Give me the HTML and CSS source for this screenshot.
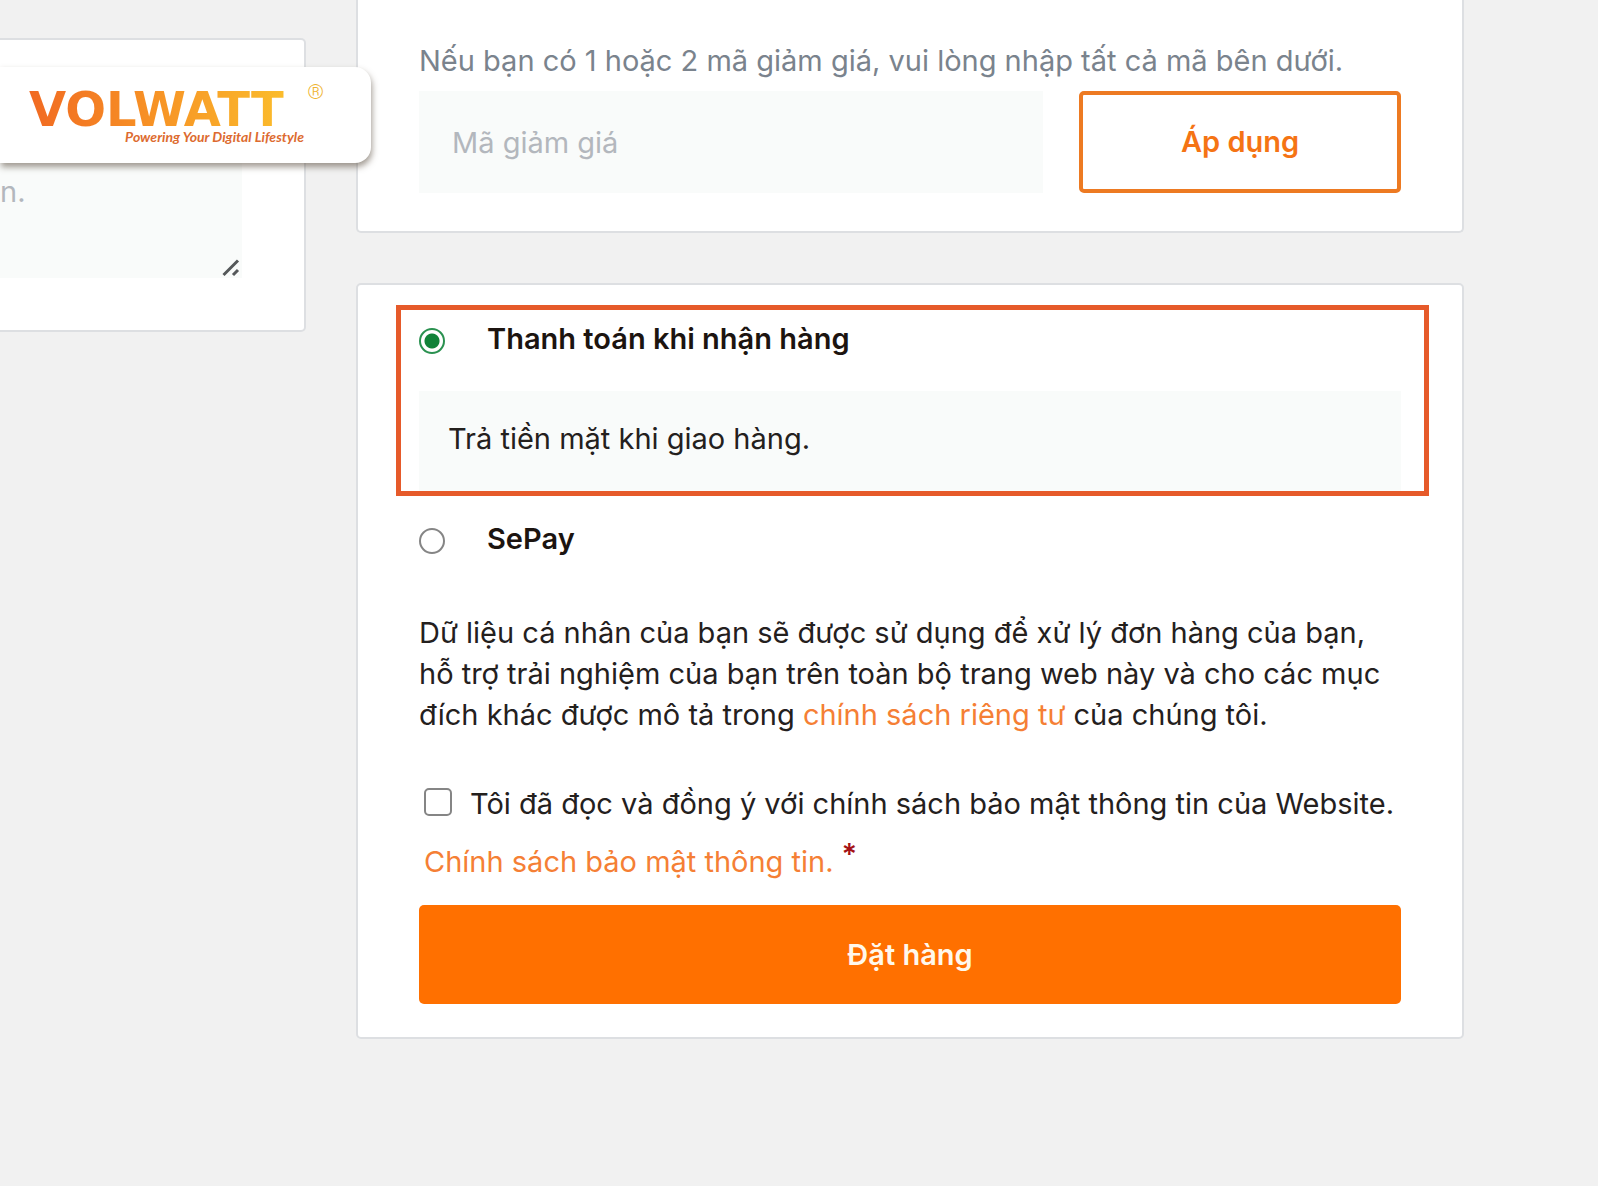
FILE: index.html
```html
<!DOCTYPE html>
<html lang="vi">
<head>
<meta charset="utf-8">
<meta name="viewport" content="width=device-width, initial-scale=1">
<title>Thanh toán</title>
<link rel="stylesheet" href="styles.css">
</head>
<body>
<div class="page">
  <header class="brand">
    <div class="brand-name"><span class="brand-word">VOLWATT</span><span class="brand-mark">®</span></div>
    <p class="brand-tagline">Powering Your Digital Lifestyle</p>
  </header>

  <main class="checkout">
    <section class="card notes">
      <div class="notes-field">
        <textarea class="notes-input" placeholder="n." aria-label="Ghi chú đơn hàng"></textarea>
        <svg class="notes-grip" viewBox="0 0 18 18" aria-hidden="true"><path d="M1.500 16 16 1.500M11 16l5-5"/></svg>
      </div>
    </section>

    <div class="summary">
      <form class="card coupon">
        <label class="coupon-hint" for="coupon">Nếu bạn có 1 hoặc 2 mã giảm giá, vui lòng nhập tất cả mã bên dưới.</label>
        <div class="coupon-row">
          <input class="coupon-input" id="coupon" type="text" placeholder="Mã giảm giá">
          <button class="button button-outline" type="button">Áp dụng</button>
        </div>
      </form>

      <form class="card payment">
        <div class="method-highlight">
          <label class="method"><input class="radio" type="radio" name="method" checked><span>Thanh toán khi nhận hàng</span></label>
          <p class="method-detail">Trả tiền mặt khi giao hàng.</p>
        </div>
        <label class="method method-other"><input class="radio" type="radio" name="method"><span>SePay</span></label>
        <p class="privacy">Dữ liệu cá nhân của bạn sẽ được sử dụng để xử lý đơn hàng của bạn, hỗ trợ trải nghiệm của bạn trên toàn bộ trang web này và cho các mục đích khác được mô tả trong <a class="link" href="#">chính sách riêng tư</a> của chúng tôi.</p>
        <div class="terms">
          <label class="terms-label"><input class="checkbox" type="checkbox"><span>Tôi đã đọc và đồng ý với chính sách bảo mật thông tin của Website.</span></label>
          <div class="terms-more"><a class="link" href="#">Chính sách bảo mật thông tin.</a><span class="required">*</span></div>
        </div>
        <button class="button button-solid" type="button">Đặt hàng</button>
      </form>
    </div>
  </main>
</div>
</body>
</html>
```

FILE: styles.css
```css
*,
*::before {
  box-sizing: border-box;
}

body {
  margin: 0;
  background: #fff;
  color: #24201d;
  font-family: Inter, "Noto Sans", sans-serif;
  font-size: 29px;
  line-height: 42px;
}

p {
  margin: 0;
}

.page {
  position: relative;
  min-height: calc(100vh - 14px);
  margin: 0 2px 14px 0;
  background: #f1f1f1;
}

/* Logo tab, laid over the checkout columns */
.brand {
  position: absolute;
  top: 67px;
  left: 0;
  z-index: 1;
  width: 371px;
  height: 96px;
  padding: 15px 47px 0 29px;
  border-radius: 0 16px 16px 0;
  background: #fff;
  box-shadow: 1px 4px 6px rgba(70, 55, 40, 0.5);
}

.brand-name {
  display: flex;
  align-items: flex-start;
  justify-content: space-between;
}

.brand-word {
  padding-top: 7px;
  background: linear-gradient(90deg, #f16a22, #f68b24 40%, #fbbc2c);
  background-clip: text;
  color: transparent;
  font: bold 48px/40px "DejaVu Sans", sans-serif;
}

.brand-mark {
  color: #efb32f;
  font: 300 21px/20px Roboto, sans-serif;
}

.brand-tagline {
  padding-right: 20px;
  color: #dd6b30;
  font: italic bold 14px/16px Lato, sans-serif;
  text-align: right;
}

.checkout {
  display: grid;
  grid-template-columns: 306px 1fr;
  gap: 50px;
  align-items: start;
  padding-right: 134px;
}

.card {
  border: 2px solid #dddfe2;
  border-radius: 5px;
  background: #fff;
}

.notes {
  margin-top: 38px;
  padding: 113px 62px 52px 0;
  border-left: 0;
  border-radius: 0 5px 5px 0;
}

.notes-field {
  position: relative;
  display: flex;
}

.notes-input,
.coupon-input {
  min-width: 0;
  border: 0;
  border-radius: 0;
  background: #f9fbfa;
  color: inherit;
  font: inherit;
}

.notes-input {
  width: 100%;
  height: 125px;
  padding: 18px 0;
  resize: none;
}

.notes-input::placeholder,
.coupon-input::placeholder {
  color: #b3b7bd;
}

.notes-grip {
  position: absolute;
  right: 2px;
  bottom: 1px;
  width: 18px;
  height: 18px;
  fill: none;
  stroke: #55585a;
  stroke-width: 3;
}

.summary {
  display: flex;
  flex-direction: column;
  gap: 50px;
}

.coupon {
  padding: 40px 61px 38px;
  border-top: 0;
  border-radius: 0 0 5px 5px;
}

.coupon-hint {
  display: block;
  color: #7a838d;
}

.coupon-row {
  display: flex;
  gap: 36px;
  padding-top: 9px;
}

.coupon-input {
  flex: 1;
  height: 102px;
  padding: 0 33px;
}

.button {
  border-radius: 5px;
  font: inherit;
  font-weight: 600;
}

.button-outline {
  width: 322px;
  border: 4px solid #ed7a22;
  background: #fff;
  color: #f57414;
}

.payment {
  padding: 20px 61px 33px;
}

.method-highlight {
  margin: 0 -28px 0 -23px;
  padding: 8px 23px 0 18px;
  border: 5px solid #e65a2a;
}

.method {
  display: flex;
  align-items: center;
  gap: 42px;
  color: #1c1410;
  font-weight: 600;
}

.method-other {
  margin-top: 22px;
}

.radio,
.checkbox {
  flex: none;
  appearance: none;
  margin: 0;
  border: 2px solid #858585;
  background: #fff;
}

.radio {
  width: 26px;
  height: 26px;
  margin-top: 3px;
  border-radius: 50%;
}

.radio:checked {
  border-color: #2a9150;
  background: radial-gradient(circle, #118238 7px, #fff 8px);
}

.method-detail {
  margin-top: 31px;
  padding: 27px 29px 31px;
  background: #f9fbfa;
}

.privacy {
  margin-top: 52px;
  line-height: 41px;
}

.link {
  color: #f57f35;
  text-decoration: none;
}

.terms {
  margin-top: 40px;
  padding-left: 5px;
  line-height: 58px;
}

.terms-label {
  display: flex;
  align-items: center;
  gap: 18px;
  white-space: nowrap;
}

.terms-more {
  display: flex;
  gap: 8px;
}

.checkbox {
  width: 28px;
  height: 28px;
  margin-bottom: 4px;
  border-radius: 5px;
}

.required {
  color: #a51216;
  font-weight: 600;
  line-height: 42px;
}

.button-solid {
  width: 100%;
  height: 99px;
  margin-top: 14px;
  border: 0;
  background: #ff7000;
  color: #fff8ec;
}
```
